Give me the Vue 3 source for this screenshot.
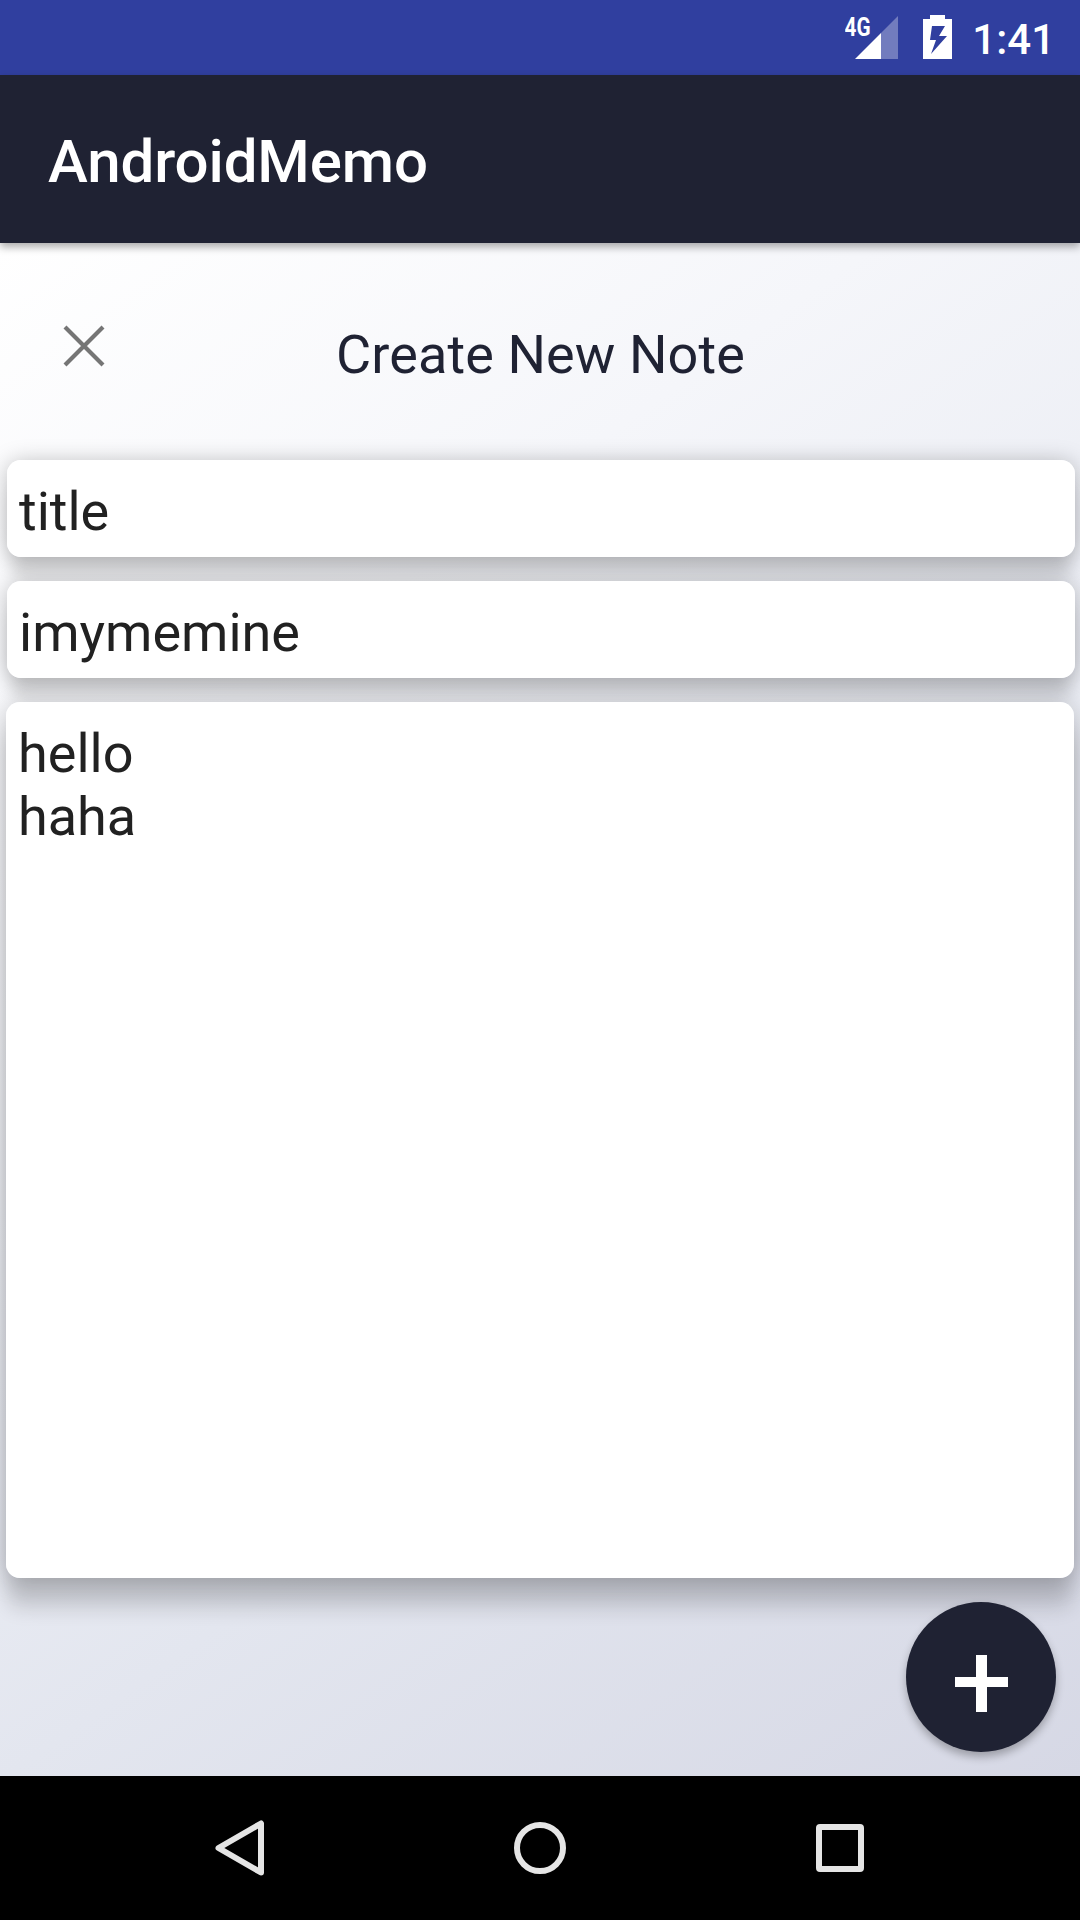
<script setup>
import { ref } from 'vue'

const title = ref('title')
const author = ref('imymemine')
const lines = ref(['hello', 'haha'])
</script>

<template>
  <div class="screen">
    <header class="status-bar">
      <svg class="signal" width="54" height="60" viewBox="0 0 54 60">
        <path d="M53 16V59H36V33Z" fill="#fff" fill-opacity="0.32" />
        <path d="M36 33V59H10Z" fill="#fff" />
        <text class="network" x="-0.5" y="35.500" textLength="26" lengthAdjust="spacingAndGlyphs">4G</text>
      </svg>
      <svg class="battery" width="29" height="60" viewBox="0 0 29 60">
        <path
          fill="#fff"
          fill-rule="evenodd"
          d="M7 15H22V19H29V59H0V19H7ZM9 26L7 40H13L8 54L24 36H16L22 26Z"
        />
      </svg>
      <span class="clock">1:41</span>
    </header>

    <div class="app-bar">AndroidMemo</div>

    <main class="content">
      <div class="heading">
        <svg class="close" width="42" height="42" viewBox="0 0 42 42">
          <path d="M2 2L40 40M40 2L2 40" stroke="#757575" stroke-width="4.2" />
        </svg>
        <h1>Create New Note</h1>
      </div>

      <div class="form">
        <div class="field">{{ title }}</div>
        <div class="field">{{ author }}</div>
        <div class="field memo">
          <div v-for="line in lines" :key="line">{{ line }}</div>
        </div>
      </div>

      <button class="fab" aria-label="Add">
        <svg width="150" height="150" viewBox="0 0 150 150">
          <path d="M70 53h11v22h21v10H81v25H70V85H49V75h21z" fill="#fff" />
        </svg>
      </button>
    </main>

    <nav class="nav-bar">
      <svg width="60" height="60" viewBox="0 0 60 60">
        <path
          d="M51 5.5V54.5L8.5 30Z"
          fill="none"
          stroke="#e5e5e5"
          stroke-width="6"
          stroke-linejoin="round"
        />
      </svg>
      <svg width="60" height="60" viewBox="0 0 60 60">
        <circle cx="30" cy="30" r="23" fill="none" stroke="#e5e5e5" stroke-width="6" />
      </svg>
      <svg width="60" height="60" viewBox="0 0 60 60">
        <path
          d="M10 6H50Q54 6 54 10V50Q54 54 50 54H10Q6 54 6 50V10Q6 6 10 6ZM12 12V48H48V12Z"
          fill="#e5e5e5"
          fill-rule="evenodd"
        />
      </svg>
    </nav>
  </div>
</template>

<style>
html,
body {
  margin: 0;
  overflow: hidden;
}
</style>

<style scoped>
.screen {
  width: 1080px;
  height: 1920px;
  display: flex;
  flex-direction: column;
  overflow: hidden;
  font-family: Roboto, "Liberation Sans", sans-serif;
}
svg {
  display: block;
}
.status-bar {
  height: 75px;
  display: flex;
  align-items: flex-start;
  justify-content: flex-end;
  box-sizing: border-box;
  padding-right: 25px;
  background: #303f9f;
}
.signal {
  margin-right: 24px;
}
.network {
  font-size: 25px;
  font-weight: 700;
  fill: #fff;
}
.battery {
  margin-right: 20.5px;
}
.clock {
  height: 75px;
  line-height: 79px;
  font-size: 42px;
  font-weight: 500;
  color: #fff;
}
.app-bar {
  position: relative;
  z-index: 1;
  height: 168px;
  box-sizing: border-box;
  padding: 5px 48px 0;
  line-height: 163px;
  font-size: 60px;
  font-weight: 500;
  letter-spacing: -0.1px;
  color: #fff;
  background: #1f2233;
  box-shadow: 0 4px 8px rgba(0, 0, 0, 0.33);
}
.content {
  height: 1533px;
  display: flex;
  flex-direction: column;
  background: linear-gradient(144.8deg, #ffffff 0%, #f5f6fa 27%, #e3e6ef 67%, #d6d8e5 100%);
}
.heading {
  height: 217px;
  display: grid;
  grid-template-columns: 63px 1fr;
}
.close {
  grid-area: 1 / 2;
  margin-top: 82px;
}
h1 {
  grid-area: 1 / 1 / 2 / 3;
  margin: 3px 0 0 1px;
  text-align: center;
  line-height: 217px;
  font-size: 54px;
  font-weight: 400;
  letter-spacing: 0.1px;
  color: #1f2233;
}
.form {
  isolation: isolate;
  display: flex;
  flex-direction: column;
  gap: 24px;
  padding: 0 5px 0 7px;
}
.field {
  position: relative;
  height: 97px;
  box-sizing: border-box;
  padding: 6px 12px 0;
  border-radius: 14px;
  line-height: 91px;
  font-size: 54px;
  color: #212121;
  background: #fff;
}
.field::before {
  content: "";
  position: absolute;
  inset: 0;
  z-index: -1;
  border-radius: 14px;
  box-shadow:
    0 24px 16px -4px rgba(0, 0, 0, 0.12),
    0 2px 22px rgba(0, 0, 0, 0.25);
}
.memo {
  height: 876px;
  margin: 0 1px 0 -1px;
  padding: 20px 12px;
  line-height: 63px;
}
.memo::before {
  box-shadow:
    0 31px 20px -1px rgba(0, 0, 0, 0.14),
    0 4px 26px rgba(0, 0, 0, 0.23);
}
.fab {
  align-self: flex-end;
  position: relative;
  width: 150px;
  height: 150px;
  margin: 24px 24px 0 0;
  padding: 0;
  border: 0;
  border-radius: 50%;
  background: #1f2233;
  box-shadow: 0 5px 8px rgba(0, 0, 0, 0.28);
}
.nav-bar {
  height: 144px;
  display: flex;
  justify-content: center;
  align-items: center;
  gap: 240px;
  background: #000;
}
</style>
